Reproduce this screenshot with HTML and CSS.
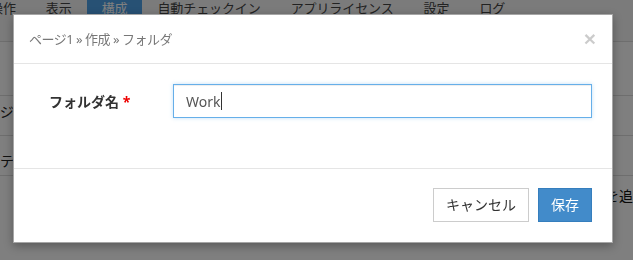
FILE: index.html
```html
<!DOCTYPE html>
<html lang="ja">
<head>
    <meta charset="UTF-8">
    <title>フォルダ作成</title>
    <link rel="stylesheet" href="styles.css">
</head>
<body>

    <!-- Page behind the dialog -->
    <div class="app">
        <ul class="tabs">
            <li>操作</li>
            <li>表示</li>
            <li class="active">構成</li>
            <li>自動チェックイン</li>
            <li>アプリライセンス</li>
            <li>設定</li>
            <li>ログ</li>
        </ul>

        <div class="content">
            <div class="row row-head"></div>
            <div class="row row-page"><span>ページ1</span></div>
            <div class="row row-items"><span>コンテンツ</span></div>
            <div class="row-actions"><span class="add-link">ページを追加</span></div>
        </div>
    </div>

    <div class="backdrop"></div>

    <!-- Create folder dialog -->
    <div class="modal">
        <div class="modal-header">
            <span class="crumbs">ページ1 » 作成 » フォルダ</span>
            <span class="close">×</span>
        </div>
        <div class="modal-body">
            <label class="field-label">フォルダ名 <span class="req">*</span></label>
            <div class="text-input"><span>Work</span><span class="caret"></span></div>
        </div>
        <div class="modal-footer">
            <button class="btn">キャンセル</button>
            <button class="btn btn-primary">保存</button>
        </div>
    </div>

</body>
</html>
```

FILE: styles.css
```css
body {
    margin: 0;
    font-family: "Noto Sans", "Noto Sans CJK JP", sans-serif;
    font-size: 14px;
    color: #333;
    background: #fff;
    overflow: hidden;
}

/* background page */
.tabs {
    list-style: none;
    margin: 0 0 0 -25px;
    padding: 0;
    display: flex;
    height: 41px;
    border-bottom: 1px solid #ddd;
    background: #f7f7f7;
}

.tabs li {
    padding: 0 15px;
    font-size: 13px;
    line-height: 16px;
    color: #444;
    white-space: nowrap;
    letter-spacing: -0.1px;
}

.tabs li.active {
    background: #4fa3e8;
    color: #fff;
}

.content {
    margin-left: -28px;
}

.row {
    height: 40px;
    border-bottom: 1px solid #ddd;
    color: #222;
    line-height: 20px;
}

.row-head {
    height: 53px;
}

.row-page {
    box-sizing: border-box;
    padding-top: 6px;
}

.row-items {
    box-sizing: border-box;
    padding-top: 15px;
}

.row-actions {
    display: flex;
    justify-content: flex-end;
    margin-right: -14px;
    padding-top: 10px;
    line-height: 20px;
}

.add-link {
    color: #111;
}

.backdrop {
    position: fixed;
    inset: 0;
    background: rgba(0, 0, 0, 0.5);
}

/* dialog */
.modal {
    position: absolute;
    left: 13px;
    top: 14px;
    width: 598px;
    background: #fff;
    border: 1px solid rgba(0, 0, 0, 0.35);
    box-shadow: 0 3px 9px rgba(0, 0, 0, 0.3);
}

.modal-header {
    height: 48px;
    padding: 0 16px 0 15px;
    border-bottom: 1px solid #e5e5e5;
    display: flex;
    align-items: center;
    justify-content: space-between;
}

.crumbs {
    font-size: 13px;
    letter-spacing: -0.5px;
    color: #777;
    margin-top: -1px;
}

.close {
    font-size: 21px;
    font-weight: bold;
    color: #000;
    opacity: 0.2;
    line-height: 1;
    margin-top: -2px;
    font-family: "Liberation Sans", sans-serif;
}

.modal-body {
    padding: 20px 20px 50px 35px;
    display: flex;
    align-items: center;
}

.field-label {
    width: 124px;
    font-weight: bold;
    color: #333;
}

.req {
    color: #e00;
}

.text-input {
    flex: 1;
    height: 34px;
    box-sizing: border-box;
    border: 1px solid #66afe9;
    padding: 0 12px;
    display: flex;
    align-items: center;
    color: #555;
    box-shadow: inset 0 1px 1px rgba(0, 0, 0, 0.075), 0 0 4px rgba(102, 175, 233, 0.4);
}

.caret {
    display: inline-block;
    width: 1px;
    height: 18px;
    background: #333;
    margin-left: 1px;
}

.modal-footer {
    padding: 19px 20px 20px;
    border-top: 1px solid #e5e5e5;
    display: flex;
    justify-content: flex-end;
    gap: 9px;
}

.btn {
    font-family: inherit;
    font-size: 14px;
    line-height: 20px;
    padding: 6px 12px;
    border: 1px solid #ccc;
    background: #fff;
    color: #333;
    border-radius: 0;
}

.btn-primary {
    background: #428bca;
    border-color: #357ebd;
    color: #fff;
}
```
